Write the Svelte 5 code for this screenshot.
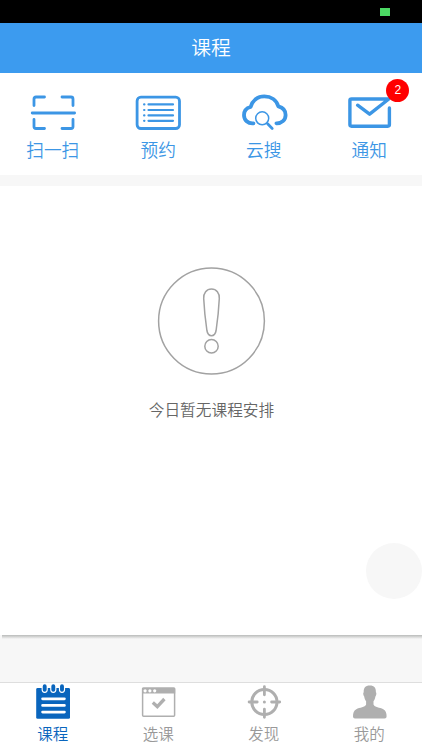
<script>
  let activeTab = 'course';
  const unread = 2;

  const ACTIONS = [
    { id: 'scan',   label: '扫一扫' },
    { id: 'book',   label: '预约' },
    { id: 'search', label: '云搜' },
    { id: 'notice', label: '通知' },
  ];

  const TABS = [
    { id: 'course',   label: '课程' },
    { id: 'select',   label: '选课' },
    { id: 'discover', label: '发现' },
    { id: 'mine',     label: '我的' },
  ];
</script>

<div class="app">
  <div class="status"><span class="battery"></span></div>
  <header class="title">课程</header>

  <nav class="actions">
    {#each ACTIONS as a}
      <button class="action">
        <span class="action-icon">
          <svg width="46" height="36" viewBox="0 0 46 36" fill="none" stroke="currentColor" stroke-width="2.8" stroke-linecap="round" stroke-linejoin="round">
            {#if a.id === 'scan'}
              <path d="M4 10.5V4Q4 2 6 2H14.5M32 2H41Q43 2 43 4V10.5M4 24.5V31.5Q4 33.5 6 33.5H14.5M32 33.5H41Q43 33.5 43 31.5V24.5M2.2 18H44.6" />
            {:else if a.id === 'book'}
              <rect x="2.1" y="2.2" width="42.4" height="31.3" rx="3.8" />
              <path stroke-width="2.2" d="M13.5 9.4H38M13.5 15H38M13.5 20.4H38M13.5 25.8H38M9.1 9.4H9.4M9.1 15H9.4M9.1 20.4H9.4M9.1 25.8H9.4" />
            {:else if a.id === 'search'}
              <path stroke-width="3.8" d="M12.4 28.3C7 28.8 3 25 3 20.2C3 16 5.5 13 9.6 12C11.5 5.5 16.5 1.3 23.3 1.3C30 1.3 35.6 5 37.4 11.4C42 12.6 44.6 16 44.6 20C44.6 25 40.5 28.5 35.4 28.3" />
              <circle stroke-width="1.5" cx="21.2" cy="23.3" r="6.5" />
              <path stroke-width="2.8" d="M26.6 28.8L31.2 33.4" />
            {:else}
              <path stroke-width="3.4" d="M43.4 13V29.6Q43.4 31.2 41.8 31.2H5.5Q3.9 31.2 3.9 29.6V5.6Q3.9 4 5.5 4H42.8L23.6 19.2L11.6 10.2" />
            {/if}
          </svg>
          {#if a.id === 'notice' && unread}
            <i class="badge">{unread}</i>
          {/if}
        </span>
        <span class="action-label">{a.label}</span>
      </button>
    {/each}
  </nav>

  <main class="content">
    <section class="card">
      <svg class="empty-icon" width="108" height="108" viewBox="0 0 108 108" fill="none" stroke="#a2a2a2" stroke-width="1.5">
        <circle cx="54.5" cy="54" r="52.9" />
        <path d="M54.5 22C59.5 22 62.6 26 62.3 31.5C61.8 42 60.5 54 59.1 63.5C58.5 67 57.1 68.7 54.5 68.7C51.9 68.7 50.5 67 49.9 63.5C48.5 54 47.2 42 46.7 31.5C46.4 26 49.5 22 54.5 22Z" />
        <circle cx="54.5" cy="79.2" r="6.7" />
      </svg>
      <p class="empty-text">今日暂无课程安排</p>
      <button class="float" aria-label="更多"></button>
    </section>
  </main>

  <nav class="tabs">
    {#each TABS as t}
      <button class="tab" class:active={activeTab === t.id} on:click={() => activeTab = t.id}>
        <svg width="34" height="34" viewBox="0 0 34 34" fill="none" stroke-linecap="round" stroke-linejoin="round">
          {#if t.id === 'course'}
            <rect x=".2" y="3" width="33.8" height="30.8" rx="1.4" fill="currentColor" />
            <path stroke="#fff" stroke-width="6.2" d="M8.7 2V4.8M17.3 2V4.8M26 2V4.8" />
            <path stroke="currentColor" stroke-width="3.9" d="M8.7 1.3V4.8M17.3 1.3V4.8M26 1.3V4.8" />
            <path stroke="#fff" stroke-width="2.8" d="M6.6 13.8H28.4M6.6 20.4H28.4M6.6 27.1H28.4" />
          {:else if t.id === 'select'}
            <g transform="translate(.6 0)">
              <rect x="1" y="3.3" width="32" height="28" rx="1" stroke="currentColor" stroke-width="1.5" />
              <path fill="currentColor" d="M.4 3.5Q.4 2.5 1.4 2.5H32.6Q33.6 2.5 33.6 3.5V8.4H.4Z" />
              <g fill="#fff"><circle cx="3.5" cy="5.8" r="1.6" /><circle cx="8.3" cy="5.8" r="1.6" /><circle cx="13.1" cy="5.8" r="1.6" /></g>
              <path stroke="currentColor" stroke-width="3.3" stroke-linecap="butt" stroke-linejoin="miter" d="M11.2 17.6L15.7 21.6L22.8 14" />
            </g>
          {:else if t.id === 'discover'}
            <g transform="translate(.4 0)">
              <circle cx="17" cy="17" r="12.6" stroke="currentColor" stroke-width="3" />
              <circle cx="17" cy="17" r="1.5" fill="currentColor" />
              <path stroke="currentColor" stroke-width="2.8" d="M17 1.7V9.8M17 24.2V32.3M1.7 17H9.8M24.2 17H32.3" />
            </g>
          {:else}
            <path transform="translate(.8 0)" fill="currentColor" d="M17 .6C21.5 .6 23.3 3.3 23.1 7.2C24 7.8 23.5 10.7 22.6 11.4C22.2 13.5 21.7 14.8 20.7 16.2V19.6C21.8 22.4 27 22.5 30.5 24.2C33.2 25.5 33.8 28.5 33.8 31.6Q33.8 33.6 31.8 33.6H2.2Q.2 33.6 .2 31.6C.2 28.5 .8 25.5 3.5 24.2C7 22.5 12.2 22.4 13.3 19.6V16.2C12.3 14.8 11.8 13.5 11.4 11.4C10.5 10.7 10 7.8 10.9 7.2C10.7 3.3 12.5 .6 17 .6Z" />
          {/if}
        </svg>
        <span>{t.label}</span>
      </button>
    {/each}
  </nav>
</div>

<style>
  :global(body) { margin: 0; background: #f7f7f7; }
  .app {
    height: 750px; display: flex; flex-direction: column; overflow: hidden;
    font-family: "Noto Sans CJK SC", sans-serif; font-weight: 350;
    background: #f7f7f7;
  }
  button {
    border: none; background: transparent; padding: 0;
    font: inherit; color: inherit; cursor: pointer;
  }
  svg { display: block; overflow: visible; }

  .status {
    height: 23px; flex: none; background: #000;
    display: flex; justify-content: flex-end; align-items: flex-start;
  }
  .battery { width: 10px; height: 8px; margin: 8px 32px 0 0; background: #4cd964; }
  .title {
    height: 50px; flex: none; background: #3c9bef; color: #fff;
    font-size: 19.8px; line-height: 48px; text-align: center;
  }

  .actions { display: flex; flex: none; height: 102px; background: #fff; color: #3c96e5; }
  .action {
    flex: 1; display: flex; flex-direction: column; align-items: center;
    justify-content: flex-start; padding-top: 22px;
  }
  .action-icon { position: relative; }
  .action-label { font-size: 17.7px; line-height: 26px; margin-top: 5px; }
  .badge {
    position: absolute; top: -16px; right: -17px;
    width: 23px; height: 23px; border-radius: 50%;
    background: #f00; color: #fff;
    font: normal 12px/22px "Liberation Sans", sans-serif; text-align: center;
  }

  .content { flex: 1; padding-top: 11px; }
  .card {
    position: relative; height: 449px; background: #fff;
    display: flex; flex-direction: column; align-items: center;
  }
  /* shadow under the bottom edge only */
  .card::after {
    content: ''; position: absolute; left: 2px; right: 0; bottom: -4px; height: 4px;
    background: linear-gradient(#b9bbba, #d5d6d5 45%, #f7f7f7);
  }
  .empty-icon { margin: 81px 0 0; }
  .empty-text {
    margin: 23px 0 0 1px; color: #666;
    font-size: 15.7px; line-height: 24px;
  }
  .float {
    position: absolute; right: 0; bottom: 36.5px;
    width: 56px; height: 56px; border-radius: 50%; background: #f7f7f7;
  }

  .tabs {
    display: flex; flex: none; height: 67px;
    background: #fff; border-top: 1px solid #dedede;
  }
  .tab {
    flex: 1; display: flex; flex-direction: column; align-items: center;
    justify-content: flex-start; padding-top: 1.5px; color: #afafaf;
  }
  .tab span { font-size: 15.5px; line-height: 22px; margin-top: 3px; color: #999; }
  .tab.active, .tab.active span { color: #0965bd; }
</style>
